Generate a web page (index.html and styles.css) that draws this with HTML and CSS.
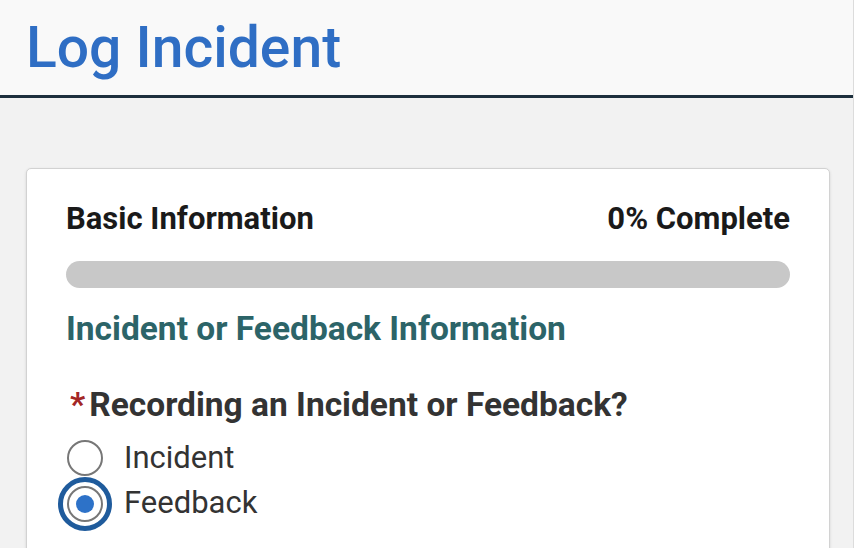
FILE: index.html
```html
<!DOCTYPE html>
<html lang="en">
<head>
  <meta charset="UTF-8">
  <title>Log Incident</title>
  <link rel="stylesheet" href="styles.css">
</head>
<body>
  <header class="topbar">
    <h1>Log Incident</h1>
  </header>

  <main class="page">
    <section class="card">
      <div class="progress-head">
        <span>Basic Information</span>
        <span>0% Complete</span>
      </div>
      <div class="progress-bar"><div class="progress-fill" style="width: 0%"></div></div>

      <h2 class="section-title">Incident or Feedback Information</h2>

      <fieldset class="question">
        <legend><span class="required">*</span>Recording an Incident or Feedback?</legend>
        <label class="radio">
          <input type="radio" name="kind" value="incident">
          <span class="radio-mark"></span>
          <span class="radio-text">Incident</span>
        </label>
        <label class="radio">
          <input type="radio" name="kind" value="feedback" checked>
          <span class="radio-mark"></span>
          <span class="radio-text">Feedback</span>
        </label>
      </fieldset>
    </section>
  </main>
</body>
</html>
```

FILE: styles.css
```css
html, body {
  height: 100%;
}
body {
  margin: 0;
  font-family: Roboto, "Liberation Sans", Arial, sans-serif;
  background: #f2f2f2;
  overflow: hidden;
  border-right: 1px solid #dcdcdc;
  box-sizing: border-box;
}
.topbar {
  height: 95px;
  background: #f9f9f9;
  border-bottom: 3px solid #1d2f3d;
  padding-left: 26px;
}
.topbar h1 {
  margin: 0;
  font-size: 57px;
  font-weight: 500;
  line-height: 96px;
  color: #2f6ec4;
}
.page {
  padding: 70px 23px 0 26px;
}
.card {
  background: #fff;
  border: 1px solid #d2d2d2;
  border-radius: 5px;
  box-shadow: 0 1px 3px rgba(0,0,0,0.12);
  padding: 30px 39px 60px;
  min-height: 400px;
}
.progress-head {
  display: flex;
  justify-content: space-between;
  font-size: 31px;
  font-weight: 700;
  color: #1a1a1a;
  line-height: 40px;
}
.progress-bar {
  margin-top: 22px;
  height: 27px;
  border-radius: 14px;
  background: #c8c8c8;
  overflow: hidden;
}
.progress-fill {
  height: 100%;
  background: #2f6ec4;
}
.section-title {
  margin: 21px 0 0;
  font-size: 33.5px;
  font-weight: 700;
  line-height: 40px;
  color: #2c6468;
}
.question {
  border: 0;
  margin: 36px 0 0;
  padding: 0;
}
.question legend {
  padding: 0;
  font-size: 33.5px;
  font-weight: 700;
  color: #333;
  line-height: 40px;
}
.required {
  color: #a32626;
  margin: 0 4px 0 4px;
}
.radio {
  display: flex;
  align-items: center;
  gap: 21px;
  height: 45px;
  font-size: 31px;
  color: #333;
}
.question legend + .radio {
  margin-top: 10px;
}
.radio input {
  display: none;
}
.radio-mark {
  position: relative;
  width: 36px;
  height: 36px;
  margin-left: 1px;
  border: 2px solid #777;
  border-radius: 50%;
  box-sizing: border-box;
}
.radio input:checked + .radio-mark {
  top: 1px;
}
.radio input:checked + .radio-mark::before {
  content: "";
  position: absolute;
  inset: -11px;
  border: 5px solid #1f5b9c;
  border-radius: 50%;
}
.radio input:checked + .radio-mark::after {
  content: "";
  position: absolute;
  inset: 7px;
  background: #2d72c8;
  border-radius: 50%;
}
```
